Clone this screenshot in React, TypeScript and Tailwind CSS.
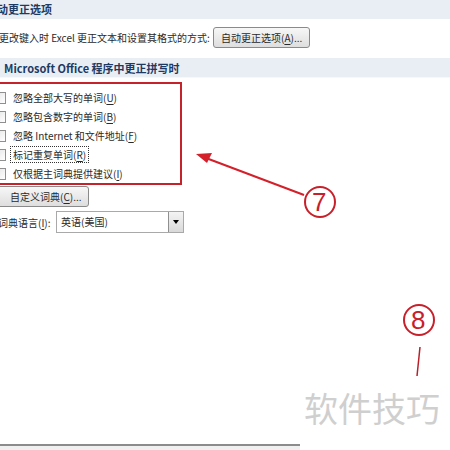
import React from 'react'

const FONT = { fontFamily: '"Noto Sans CJK SC", "Liberation Sans", sans-serif' }

const OPTIONS = [
    { label: '忽略全部大写的单词', key: 'U' },
    { label: '忽略包含数字的单词', key: 'B' },
    { label: '忽略 Internet 和文件地址', key: 'F' },
    { label: '标记重复单词', key: 'R', focus: true },
    { label: '仅根据主词典提供建议', key: 'I' },
]

function Key({ k }: { k: string }) {
    return (
        <>
            (<span className="underline underline-offset-2">{k}</span>)
        </>
    )
}

function Checkbox() {
    return <span className="block w-[12px] h-[12px] shrink-0 border border-[#8f8f8f] bg-gradient-to-br from-[#e4e4e4] to-white" />
}

export default function App() {
    return (
        <div className="relative w-[450px] h-[450px] overflow-hidden bg-white text-[10px] text-[#2a2a2a]" style={FONT}>
            {/* section 1 */}
            <div className="h-[19px] bg-[#e9eef4] font-bold text-[11px] text-[#1d3a64] leading-[19px] -ml-[3px] whitespace-nowrap">
                动更正选项
            </div>
            <div className="flex items-center mt-[8px] h-[21px] whitespace-nowrap">
                <span className="w-[214px] -ml-[1px]">更改键入时 Excel 更正文本和设置其格式的方式:</span>
                <button className="h-[21px] px-[7px] border border-[#8a8a8a] rounded-[3px] bg-gradient-to-b from-[#f7f7f7] to-[#dedede] text-[10px] leading-[19px]">
                    自动更正选项<Key k="A" />...
                </button>
            </div>

            {/* section 2 */}
            <div className="mt-[10px] h-[20px] bg-[#e9eef4] border-b border-[#f6f8fb] font-bold text-[11px] text-[#1d3a64] leading-[20px] pl-[4px] whitespace-nowrap">
                Microsoft Office 程序中更正拼写时
            </div>

            <div className="mt-[4px] -ml-[4px] w-[186px] h-[103px] border-2 border-[#c5232b] pt-[4px]">
                {OPTIONS.map((o) => (
                    <div key={o.key} className="flex items-center h-[19px] whitespace-nowrap">
                        <span className="-ml-[4px]">
                            <Checkbox />
                        </span>
                        <span
                            className={
                                o.focus
                                    ? 'ml-[4px] px-[2px] border border-dotted border-[#333] leading-[15px]'
                                    : 'ml-[7px]'
                            }
                        >
                            {o.label}
                            <Key k={o.key} />
                        </span>
                    </div>
                ))}
            </div>

            <div className="mt-[1px] flex">
                <button className="h-[21px] -ml-[3px] pl-[12px] pr-[6px] border border-[#8a8a8a] rounded-[3px] bg-gradient-to-b from-[#f7f7f7] to-[#dedede] text-[10px] leading-[19px] whitespace-nowrap">
                    自定义词典<Key k="C" />...
                </button>
            </div>

            <div className="mt-[4px] flex items-center h-[22px] whitespace-nowrap">
                <span className="w-[58px] -ml-[2px]">
                    词典语言<Key k="I" />:
                </span>
                <div className="w-[128px] h-[22px] flex border border-[#a9a9a9] bg-white">
                    <span className="flex-1 pl-[4px] leading-[20px]">英语(美国)</span>
                    <span className="w-[15px] h-full flex items-center justify-center border-l border-[#8f8f8f] bg-gradient-to-b from-[#f4f4f4] to-[#d9d9d9]">
                        <span className="w-0 h-0 border-l-[3px] border-r-[3px] border-t-[4px] border-l-transparent border-r-transparent border-t-black" />
                    </span>
                </div>
            </div>

            {/* bottom rule */}
            <div className="absolute left-0 top-[444px] w-[300px] h-[2px] bg-[#8c8c8c]" />
            <div className="absolute left-0 top-[446px] w-[300px] h-[4px] bg-[#f0f0f0]" />

            {/* annotations */}
            <svg className="absolute left-0 top-0" width="450" height="450">
                <line x1="304" y1="195" x2="206" y2="158" stroke="#d3202a" strokeWidth="2" />
                <polygon points="196,154 212,153 207,163" fill="#d3202a" />
                <circle cx="320" cy="202" r="15" fill="none" stroke="#c8202a" strokeWidth="2" />
                <circle cx="419" cy="320" r="15" fill="none" stroke="#c8202a" strokeWidth="2" />
                <line x1="420" y1="347" x2="417" y2="376" stroke="#b8202a" strokeWidth="1.5" />
            </svg>
            <span className="absolute left-[312px] top-[185px] text-[26px] leading-[34px] text-[#c8202a]" style={{ fontFamily: '"Liberation Sans", sans-serif' }}>
                7
            </span>
            <span className="absolute left-[411px] top-[303px] text-[26px] leading-[34px] text-[#c8202a]" style={{ fontFamily: '"Liberation Sans", sans-serif' }}>
                8
            </span>
            <span className="absolute left-[304px] top-[388px] text-[34px] leading-[40px] text-[#cfcfcf] whitespace-nowrap">
                软件技巧
            </span>
        </div>
    )
}
